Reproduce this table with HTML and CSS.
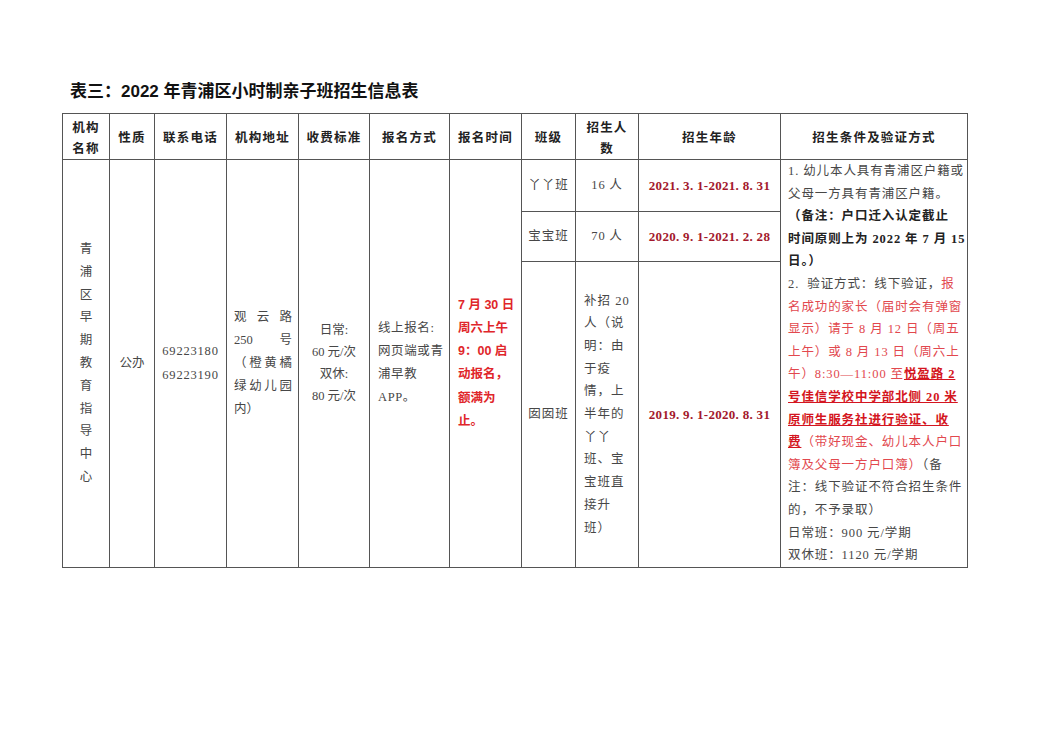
FILE: index.html
```html
<!DOCTYPE html>
<html lang="zh-CN">
<head>
<meta charset="utf-8">
<title>表三</title>
<link rel="stylesheet" href="styles.css">
</head>
<body>
<div class="page">
  <h1 class="title">表三：2022 年青浦区小时制亲子班招生信息表</h1>
  <table class="info">
    <colgroup>
      <col class="c1"><col class="c2"><col class="c3"><col class="c4"><col class="c5"><col class="c6"><col class="c7"><col class="c8"><col class="c9"><col class="c10"><col class="c11">
    </colgroup>
    <thead>
      <tr class="head">
        <th class="two">机构<br>名称</th>
        <th>性质</th>
        <th>联系电话</th>
        <th>机构地址</th>
        <th>收费标准</th>
        <th>报名方式</th>
        <th>报名时间</th>
        <th>班级</th>
        <th class="two">招生人<br>数</th>
        <th>招生年龄</th>
        <th>招生条件及验证方式</th>
      </tr>
    </thead>
    <tbody>
      <tr class="r1">
        <td rowspan="3" class="vert">青<br>浦<br>区<br>早<br>期<br>教<br>育<br>指<br>导<br>中<br>心</td>
        <td rowspan="3" class="center">公办</td>
        <td rowspan="3" class="num">69223180<br>69223190</td>
        <td rowspan="3" class="addr">
          <span class="jline">观云路</span>
          <span class="jline">250 号</span>
          <span class="jline">（橙黄橘</span>
          <span class="jline">绿幼儿园</span>
          <span class="lline">内）</span>
        </td>
        <td rowspan="3" class="fee">日常:<br>60 元/次<br>双休:<br>80 元/次</td>
        <td rowspan="3" class="method">线上报名:<br>网页端或青<br>浦早教<br>APP。</td>
        <td rowspan="3" class="time">7 月 30 日<br>周六上午<br>9：00 启<br>动报名，<br>额满为<br>止。</td>
        <td class="cls">丫丫班</td>
        <td class="cnt">16 人</td>
        <td class="age">2021. 3. 1-2021. 8. 31</td>
        <td rowspan="3" class="cond">1. 幼儿本人具有青浦区户籍或<br>父母一方具有青浦区户籍。<br><b>（备注：户口迁入认定截止<br>时间原则上为 2022 年 7 月 15<br>日。）</b><br>2.&nbsp; 验证方式：线下验证，<span class="red">报<br>名成功的家长（届时会有弹窗<br>显示）请于 8 月 12 日（周五<br>上午）或 8 月 13 日（周六上<br>午）8:30—11:00 至<b class="ul">悦盈路 2<br>号佳信学校中学部北侧 20 米<br>原师生服务社进行验证、收<br>费</b>（带好现金、幼儿本人户口<br>簿及父母一方户口簿）</span>（备<br>注：线下验证不符合招生条件<br>的，不予录取）<br>日常班：900 元/学期<br>双休班：1120 元/学期</td>
      </tr>
      <tr class="r2">
        <td class="cls">宝宝班</td>
        <td class="cnt">70 人</td>
        <td class="age">2020. 9. 1-2021. 2. 28</td>
      </tr>
      <tr class="r3">
        <td class="cls">囡囡班</td>
        <td class="extra">补招 20<br>人（说<br>明：由<br>于疫<br>情，上<br>半年的<br>丫丫<br>班、宝<br>宝班直<br>接升<br>班）</td>
        <td class="age">2019. 9. 1-2020. 8. 31</td>
      </tr>
    </tbody>
  </table>
</div>
</body>
</html>
```

FILE: styles.css
```css
html, body {
  margin: 0;
  padding: 0;
  background: #ffffff;
}

.page {
  padding: 80px 0 0 62px;
}

.title {
  margin: 0 0 9px 8px;
  font: bold 17px/24px "Liberation Sans", "Noto Sans CJK SC", sans-serif;
  color: #111;
}

.info {
  border-collapse: collapse;
  table-layout: fixed;
  width: 905px;
  border: 1.5px solid #555;
}

.c1 { width: 47px; }
.c2 { width: 45px; }
.c3 { width: 72px; }
.c4 { width: 72px; }
.c5 { width: 71px; }
.c6 { width: 80px; }
.c7 { width: 72px; }
.c8 { width: 54px; }
.c9 { width: 63px; }
.c10 { width: 142px; }
.c11 { width: 187px; }

.info th,
.info td {
  border: 1.5px solid #555;
  padding: 0 6px;
  vertical-align: middle;
  font-family: "Liberation Serif", "Noto Sans CJK SC", serif;
  font-size: 12.5px;
  line-height: 23px;
  color: #474747;
  font-weight: normal;
}

.head {
  height: 46px;
}

.info th {
  font-family: "Noto Sans CJK SC", sans-serif;
  font-weight: bold;
  font-size: 12.5px;
  color: #222;
  text-align: center;
  letter-spacing: 1.2px;
  line-height: 21px;
  padding: 0 2px;
}

.r1 { height: 52px; }
.r2 { height: 50px; }
.r3 { height: 305px; }

.info td.vert {
  text-align: center;
  line-height: 22.8px;
}

.info td.center {
  text-align: center;
}

.info td.num {
  text-align: center;
  letter-spacing: 0.8px;
  line-height: 24px;
}

.info td.addr {
  padding: 0 6px 0 7px;
  line-height: 23px;
}

.jline {
  display: block;
  text-align: justify;
  text-align-last: justify;
}

.lline {
  display: block;
  text-align: left;
}

.info td.fee {
  text-align: center;
  line-height: 22px;
}

.info td.method {
  padding: 0 2px 0 8px;
  letter-spacing: 0.6px;
  line-height: 23px;
  white-space: nowrap;
}

.info td.time {
  padding-left: 8px;
  color: #e0262a;
  font-weight: bold;
  font-family: "Liberation Sans", "Noto Sans CJK SC", sans-serif;
  font-size: 12.5px;
  line-height: 23.2px;
}

.info td.cls {
  text-align: center;
  letter-spacing: 1px;
}

.info td.cnt {
  text-align: center;
  letter-spacing: 0.8px;
}

.info td.extra {
  padding-left: 8px;
  line-height: 22.7px;
  letter-spacing: 1px;
}

.info td.age {
  text-align: center;
  color: #a3182c;
  font-weight: bold;
  font-size: 13px;
  letter-spacing: 0.3px;
}

.info td.cond {
  vertical-align: top;
  padding: 0 4px 0 7px;
  line-height: 22.6px;
  letter-spacing: 0.9px;
  white-space: nowrap;
}

.cond b {
  color: #222;
  font-weight: bold;
}

.red {
  color: #e2484e;
}

.cond b.ul {
  color: #d41520;
  text-decoration: underline;
}
```
